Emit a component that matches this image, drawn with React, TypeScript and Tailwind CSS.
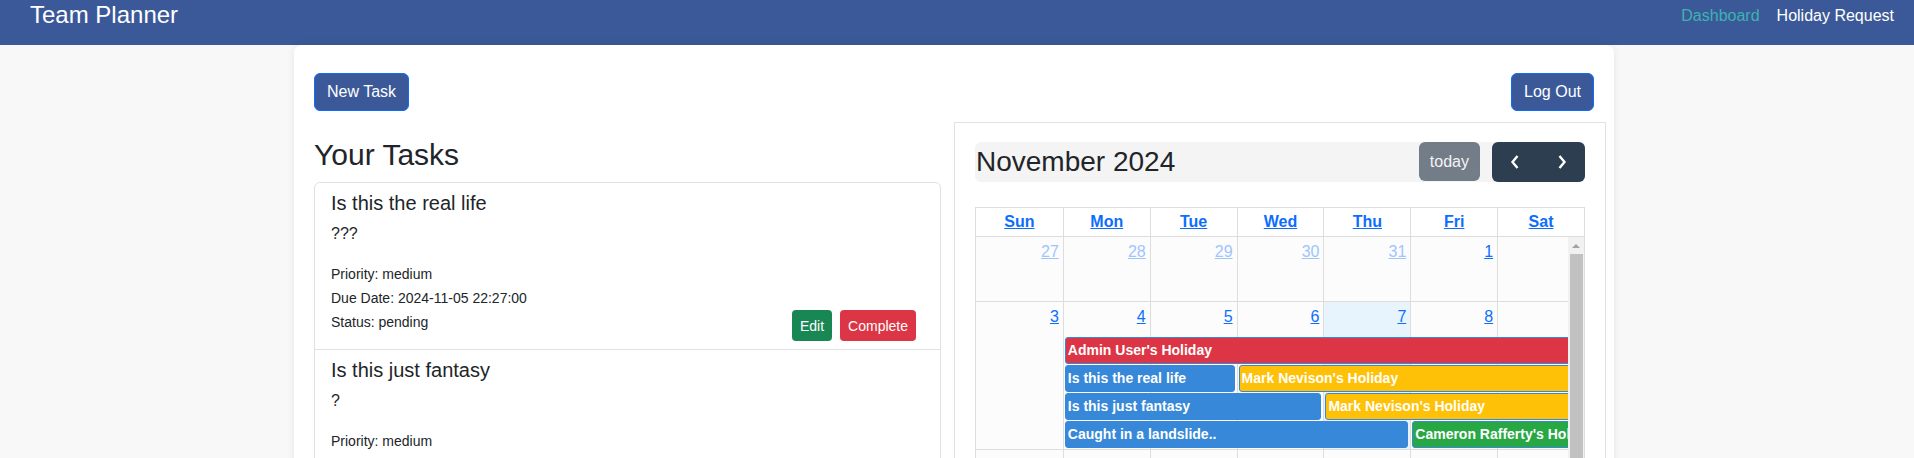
import React from "react";

const tasks = [
  { title: "Is this the real life", body: "???", priority: "medium", due: "2024-11-05 22:27:00", status: "pending" },
  { title: "Is this just fantasy", body: "?", priority: "medium", due: "2024-11-06 12:00:00", status: "pending" },
  { title: "Caught in a landslide..", body: "??", priority: "high", due: "2024-11-07 09:00:00", status: "pending" },
];

const dayNames = ["Sun", "Mon", "Tue", "Wed", "Thu", "Fri", "Sat"];

const colStart = ["col-start-1", "col-start-2", "col-start-3", "col-start-4", "col-start-5", "col-start-6", "col-start-7"];

const weeks = [
  [
    { n: 27, other: true },
    { n: 28, other: true },
    { n: 29, other: true },
    { n: 30, other: true },
    { n: 31, other: true },
    { n: 1 },
    { n: 2 },
  ],
  [{ n: 3 }, { n: 4 }, { n: 5 }, { n: 6 }, { n: 7, today: true }, { n: 8 }, { n: 9 }],
  [{ n: 10 }, { n: 11 }, { n: 12 }, { n: 13 }, { n: 14 }, { n: 15 }, { n: 16 }],
  [{ n: 17 }, { n: 18 }, { n: 19 }, { n: 20 }, { n: 21 }, { n: 22 }, { n: 23 }],
];

// events of the week of the 3rd, laid on the grid by column / row
const events = [
  { title: "Admin User's Holiday", cls: "col-start-2 col-end-8 row-start-2 bg-[#dc3545]" },
  { title: "Is this the real life", cls: "col-start-2 col-end-4 row-start-3 bg-[#3788d8]" },
  { title: "Mark Nevison's Holiday", cls: "col-start-4 col-end-8 row-start-3 bg-[#ffc107]" },
  { title: "Is this just fantasy", cls: "col-start-2 col-end-5 row-start-4 bg-[#3788d8]" },
  { title: "Mark Nevison's Holiday", cls: "col-start-5 col-end-8 row-start-4 bg-[#ffc107]" },
  { title: "Caught in a landslide..", cls: "col-start-2 col-end-6 row-start-5 bg-[#3788d8]" },
  { title: "Cameron Rafferty's Holiday", cls: "col-start-6 col-end-8 row-start-5 bg-[#28a745]" },
];

function DayCell({ day, i, span }: { day: { n: number; other?: boolean; today?: boolean }; i: number; span?: boolean }) {
  return (
    <div
      className={`${colStart[i]} ${span ? "row-span-full" : ""} ${i > 0 ? "border-l border-[#ddd]" : ""} ${
        day.today ? "bg-[#e8f4fd]" : "bg-[#fcfcfc]"
      } text-right pr-[4px] pt-[3px] leading-[24px] text-[16px]`}
    >
      <a className={`underline ${day.other ? "text-[#9ec5fe]" : "text-[#0d6efd]"}`}>{day.n}</a>
    </div>
  );
}

function Calendar() {
  return (
    <div className="w-[652px] border border-[#dee2e6] px-[20px] pt-[19px]">
      <div className="flex h-[40px] bg-[#f4f4f4] rounded-[6px]">
        <h2 className="pl-[1px] text-[28px] leading-[40px] text-[#212529]">November 2024</h2>
        <button className="ml-auto h-[39px] px-[11px] bg-[#737d88] text-[#f4f4f4] text-[16px] rounded-[6px]">today</button>
        <div className="ml-[12px] flex h-[40px] bg-[#2c3e50] rounded-[6px]">
          <button className="w-[46px] flex items-center justify-center" aria-label="prev">
            <svg width="10" height="16" viewBox="0 0 10 16">
              <path d="M7.5 2 L2.5 8 L7.5 14" fill="none" stroke="white" strokeWidth="2.4" />
            </svg>
          </button>
          <button className="w-[47px] flex items-center justify-center" aria-label="next">
            <svg width="10" height="16" viewBox="0 0 10 16">
              <path d="M2.5 2 L7.5 8 L2.5 14" fill="none" stroke="white" strokeWidth="2.4" />
            </svg>
          </button>
        </div>
      </div>

      <div className="mt-[25px] border border-[#ddd]">
        <div className="grid grid-cols-7 border-b border-[#ddd] bg-white">
          {dayNames.map((d, i) => (
            <div key={d} className={`${i > 0 ? "border-l border-[#ddd]" : ""} text-center leading-[28px] text-[16px]`}>
              <a className="font-bold underline text-[#0d6efd]">{d}</a>
            </div>
          ))}
        </div>

        <div className="relative overflow-hidden">
          {weeks.map((w, wi) =>
            wi === 1 ? (
              <div key={wi} className="grid grid-cols-7 grid-rows-[35px_28px_28px_28px_28px] border-b border-[#ddd]">
                {w.map((d, i) => (
                  <DayCell key={i} day={d} i={i} span />
                ))}
                {events.map((e, k) => (
                  <div
                    key={k}
                    className={`${e.cls} h-[27px] mx-[2px] rounded-[3px] border border-[#3788d8] pl-[2px] text-white font-bold text-[14px] leading-[25px] whitespace-nowrap overflow-hidden`}
                  >
                    {e.title}
                  </div>
                ))}
              </div>
            ) : (
              <div key={wi} className="grid grid-cols-7 h-[65px] border-b border-[#ddd]">
                {w.map((d, i) => (
                  <DayCell key={i} day={d} i={i} />
                ))}
              </div>
            )
          )}
          {/* the body's own scrollbar */}
          <div className="absolute top-0 right-0 bottom-0 w-[16px] bg-[#f1f1f1] flex flex-col items-center">
            <div className="mt-[7px] w-0 h-0 border-l-[4px] border-r-[4px] border-b-[4px] border-l-transparent border-r-transparent border-b-[#a3a3a3]" />
            <div className="mt-[6px] w-[13px] h-[400px] bg-[#c1c1c1]" />
          </div>
        </div>
      </div>
    </div>
  );
}

export default function App() {
  return (
    <div className="h-[458px] overflow-hidden bg-[#f8f8f8] text-[#212529] font-['Liberation_Sans',Arial,sans-serif]">
      <nav className="h-[45px] bg-[#3b5998] flex justify-between">
        <a className="ml-[30px] text-[24px] leading-[29px] text-white">Team Planner</a>
        <div className="mr-[20px] pt-[4px] flex gap-[17px] text-[16px] leading-[24px]">
          <a className="text-[#3cb3b0]">Dashboard</a>
          <a className="text-white">Holiday Request</a>
        </div>
      </nav>

      <div className="ml-[294px] w-[1320px] bg-white rounded-lg shadow-[0_0_8px_rgba(0,0,0,0.08)] pl-[20px] pr-[8px] pt-[28px] pb-10">
        <div className="flex justify-between mr-[12px]">
          <button className="h-[38px] px-[12px] border border-[#0d6efd] bg-[#3b5998] text-white text-[16px] rounded-[6px]">New Task</button>
          <button className="h-[38px] px-[12px] border border-[#0d6efd] bg-[#3b5998] text-white text-[16px] rounded-[6px]">Log Out</button>
        </div>

        <div className="mt-[11px] flex gap-[13px] items-start">
          <div className="w-[627px]">
            <h2 className="mt-[15px] mb-[9px] text-[30px] leading-[36px]">Your Tasks</h2>
            <div className="border border-[#dee2e6] rounded-[6px]">
              {tasks.map((t, i) => (
                <div key={i} className={`px-[16px] py-[8px] ${i > 0 ? "border-t border-[#dee2e6]" : ""}`}>
                  <h5 className="text-[20px] leading-[24px] mb-[7px]">{t.title}</h5>
                  <p className="text-[16px] leading-[24px] mb-[16px]">{t.body}</p>
                  <div className="text-[14px] leading-[24px]">
                    <div>Priority: {t.priority}</div>
                    <div>Due Date: {t.due}</div>
                    <div className="flex justify-between items-start">
                      <span>Status: {t.status}</span>
                      <div className="flex gap-[8px] mr-[8px]">
                        <button className="h-[31px] px-[8px] bg-[#198754] text-white text-[14px] rounded-[4px]">Edit</button>
                        <button className="h-[31px] px-[8px] bg-[#dc3545] text-white text-[14px] rounded-[4px]">Complete</button>
                      </div>
                    </div>
                  </div>
                </div>
              ))}
            </div>
          </div>

          <Calendar />
        </div>
      </div>
    </div>
  );
}
